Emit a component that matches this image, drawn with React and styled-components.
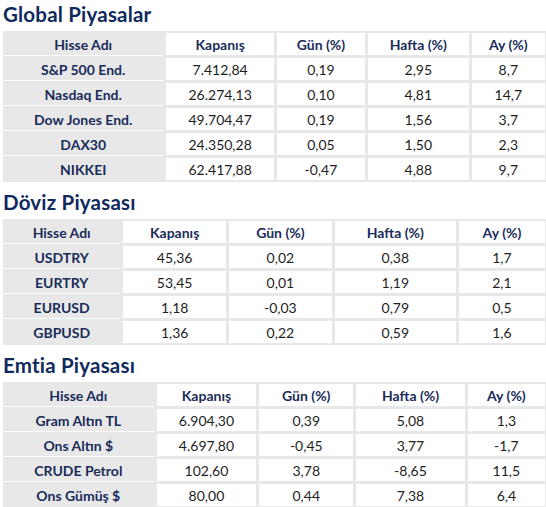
import React from "react";
import styled, { createGlobalStyle } from "styled-components";

const Global = createGlobalStyle`
  html, body { margin: 0; padding: 0; background: #ffffff; }
  body { font-family: Lato, "Open Sans", sans-serif; }
`;

const Page = styled.div`
  width: 546px;
  padding-left: 3px;
  box-sizing: border-box;
`;

const Title = styled.h2`
  margin: 0;
  padding: ${(p) => (p.$first ? "2px" : "8px")} 0 5px 0;
  font-size: 20.5px;
  line-height: 24px;
  font-weight: 700;
  color: #0f2a5e;
  letter-spacing: 0.2px;
`;

const Grid = styled.div`
  display: grid;
  grid-template-columns: ${(p) => p.$cols};
  grid-auto-rows: 22px;
  gap: 3px;
  padding: 2px 1px 2px 0;
  background: #e8e8e8;
`;

const Cell = styled.div`
  display: flex;
  align-items: center;
  justify-content: center;
  white-space: nowrap;
  background: ${(p) => (p.$name ? "#e8e8e8" : "#ffffff")};
  color: ${(p) => (p.$head || p.$name ? "#1a2c5a" : "#1e1e1e")};
  font-size: 14px;
  font-weight: ${(p) => (p.$head || p.$name ? 700 : 400)};
  box-shadow: ${(p) => (p.$name && !p.$last ? "0 1px 0 #ffffff" : "none")};
`;

const headers = ["Hisse Adı", "Kapanış", "Gün (%)", "Hafta (%)", "Ay (%)"];

const tables = [
  {
    title: "Global Piyasalar",
    cols: "164fr 110fr 90fr 103fr 75fr",
    rows: [
      ["S&P 500 End.", "7.412,84", "0,19", "2,95", "8,7"],
      ["Nasdaq End.", "26.274,13", "0,10", "4,81", "14,7"],
      ["Dow Jones End.", "49.704,47", "0,19", "1,56", "3,7"],
      ["DAX30", "24.350,28", "0,05", "1,50", "2,3"],
      ["NIKKEI", "62.417,88", "-0,47", "4,88", "9,7"],
    ],
  },
  {
    title: "Döviz Piyasası",
    cols: "120fr 105fr 105fr 124fr 88fr",
    rows: [
      ["USDTRY", "45,36", "0,02", "0,38", "1,7"],
      ["EURTRY", "53,45", "0,01", "1,19", "2,1"],
      ["EURUSD", "1,18", "-0,03", "0,79", "0,5"],
      ["GBPUSD", "1,36", "0,22", "0,59", "1,6"],
    ],
  },
  {
    title: "Emtia Piyasası",
    cols: "154fr 102fr 96fr 111fr 79fr",
    rows: [
      ["Gram Altın TL", "6.904,30", "0,39", "5,08", "1,3"],
      ["Ons Altın $", "4.697,80", "-0,45", "3,77", "-1,7"],
      ["CRUDE Petrol", "102,60", "3,78", "-8,65", "11,5"],
      ["Ons Gümüş $", "80,00", "0,44", "7,38", "6,4"],
    ],
  },
];

function MarketTable({ title, cols, rows, first }) {
  const all = [headers, ...rows];
  return (
    <section>
      <Title $first={first}>{title}</Title>
      <Grid $cols={cols}>
        {all.map((row, ri) =>
          row.map((val, ci) => (
            <Cell
              key={ri + "-" + ci}
              $head={ri === 0}
              $name={ci === 0}
              $last={ri === all.length - 1}
            >
              {val}
            </Cell>
          ))
        )}
      </Grid>
    </section>
  );
}

export default function App() {
  return (
    <>
      <Global />
      <Page>
        {tables.map((t, i) => (
          <MarketTable key={t.title} {...t} first={i === 0} />
        ))}
      </Page>
    </>
  );
}
